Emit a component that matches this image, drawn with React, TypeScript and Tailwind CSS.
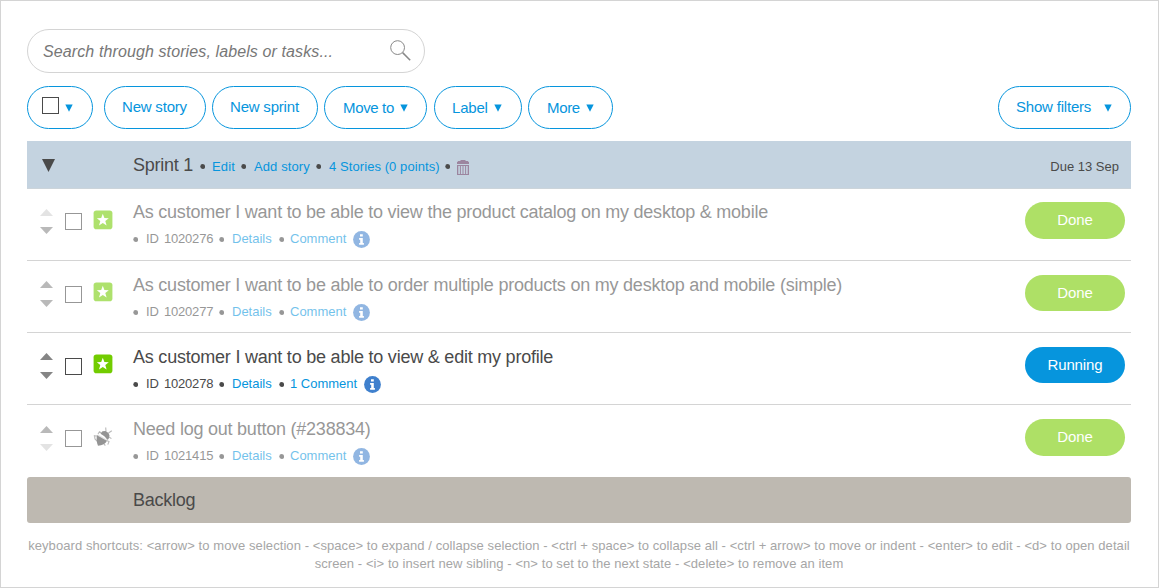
import React from "react";

const Caret = ({ className = "" }: { className?: string }) => (
  <svg className={`shrink-0 ${className}`} width="8" height="8" viewBox="0 0 8 8" fill="currentColor">
    <path d="M0.3 0.5H7.7L4 7.8Z" />
  </svg>
);

const Dot = ({ className }: { className: string }) => (
  <span className={`block shrink-0 ${className}`}>
    <svg width="5" height="5" viewBox="0 0 5 5" fill="currentColor">
      <circle cx="2.7" cy="2.5" r="2.4" />
    </svg>
  </span>
);

const Info = () => (
  <svg className="mt-[1px] shrink-0" width="17" height="17" viewBox="0 0 17 17">
    <circle cx="8.5" cy="8.5" r="8.4" fill="#3f80cd" />
    <path d="M7 3.2h2.8v2.3H7zM6.1 7h3.7v5h1.1v1.7H6.1V12h1.1V8.7H6.1z" fill="#fff" />
  </svg>
);

const Star = () => (
  <svg width="20" height="20" viewBox="0 0 20 20">
    <rect x="0.6" y="0.4" width="18.8" height="18.8" rx="2.8" fill="#72cc00" />
    <path d="M9.800 3.700l1.600 4.300 4.400.2-3.500 2.700 1.300 4.600-3.800-2.600L6 15.500l1.300-4.600L3.800 8.200l4.400-.2z" fill="#fff" />
  </svg>
);

const Bug = () => (
  <svg width="20" height="21" viewBox="0 0 20 21">
    <g fill="#444">
      <path d="M4 9.200L13.800 14.800C13 17.500 9 19.600 5 19.700C3.800 17 3.200 12.500 4 9.200Z" />
      <path d="M7.500 7.800L9.500 5.300L12.500 5L15.500 7L16.500 9.500L15.600 13L14.300 13.700C12.800 11.300 10.200 9.300 7.500 7.800Z" />
      <path d="M5.200 8.600L14.200 13.800L13.800 14.800L4 9.200Z" opacity=".25" />
    </g>
    <path d="M13 5.500L12.700 1.500M15.500 7L18.800 4.800M8.500 7L6.500 5.800 5 8M4.500 10L1.500 9.800 2 13 4.500 15.500M.8 9.800L2 10M13.500 14.500L16 15.600 14.800 18.600M16 11L18.400 12.600M11 17.700L12.300 19.600" fill="none" stroke="#444" strokeWidth="1.1" opacity=".65" />
  </svg>
);

const Trash = () => (
  <svg className="shrink-0" width="12" height="15" viewBox="0 0 12 15" fill="#9c859f">
    <path d="M3.5 0h5v1H11v.8h1V4H0V1.800h1V1h2.500z" />
    <path d="M0 5h12v10H0zM1.300 6v8h1.600V6zM3.900 6v8h1.600V6zM6.500 6v8h1.600V6zM9.100 6v8h1.600V6z" fillRule="evenodd" />
  </svg>
);

const Check = ({ className = "" }: { className?: string }) => (
  <span className={`block size-[17px] shrink-0 border border-[#4a4a4a] bg-white ${className}`} />
);

const pill = "flex h-[43px] shrink-0 items-center rounded-full border border-[#0695dd] pb-px whitespace-nowrap";

type Story = {
  id: string;
  title: string;
  titleClass: string;
  comment: string;
  commentClass: string;
  state: string;
  bug?: boolean;
  first?: boolean;
  last?: boolean;
};

const stories: Story[] = [
  { id: "1020276", title: "As customer I want to be able to view the product catalog on my desktop & mobile", titleClass: "tracking-[-0.23px]", comment: "Comment", commentClass: "w-[63px]", state: "Done", first: true },
  { id: "1020277", title: "As customer I want to be able to order multiple products on my desktop and mobile (simple)", titleClass: "tracking-[-0.225px]", comment: "Comment", commentClass: "w-[63px]", state: "Done" },
  { id: "1020278", title: "As customer I want to be able to view & edit my profile", titleClass: "tracking-[-0.22px]", comment: "1 Comment", commentClass: "w-[74px]", state: "Running" },
  { id: "1021415", title: "Need log out button (#238834)", titleClass: "tracking-[-0.23px]", comment: "Comment", commentClass: "w-[63px]", state: "Done", bug: true, last: true },
];

function StoryRow({ s }: { s: Story }) {
  const done = s.state === "Done";
  const tall = s.first || s.last;
  return (
    <div className={`flex h-[72px] items-start ${s.last ? "" : "border-b border-[#d4d4d4]"}`}>
      <div className={`flex min-w-0 flex-1 items-start ${done ? "opacity-57" : ""}`}>
        <svg className={`ml-[13px] shrink-0 ${s.last ? "mt-[21px]" : "mt-5"}`} width="13" height="26" viewBox="0 0 13 26" fill="#858585">
          <path d="M0 7L6.500 0L13 7Z" opacity={s.first ? 0.4 : 1} />
          <path d={tall ? "M0 18H13L6.500 25Z" : "M0 19H13L6.500 26Z"} opacity={s.last ? 0.4 : 1} />
        </svg>
        <Check className={`ml-3 ${s.first ? "mt-6" : "mt-[25px]"}`} />
        <div className="mt-[21px] ml-[11px] w-[20px] shrink-0">{s.bug ? <Bug /> : <Star />}</div>
        <div className={`ml-5 ${s.first ? "pt-3" : "pt-[13px]"}`}>
          <div className={`h-[22px] text-[18px] leading-[22px] whitespace-nowrap ${s.titleClass}`}>{s.title}</div>
          <div className="mt-[6px] flex h-5 items-center text-[13px] leading-5 whitespace-nowrap">
            <Dot className="w-[13px]" />
            <span className="w-[18px]">ID</span>
            <span className="w-[55px] tracking-[-0.2px]">{s.id}</span>
            <Dot className="w-[13px]" />
            <span className="w-[47px] text-[#0695dd]">Details</span>
            <Dot className="w-[11px]" />
            <span className={`text-[#0695dd] ${s.commentClass}`}>{s.comment}</span>
            <Info />
          </div>
        </div>
      </div>
      <button className={`mr-[6px] w-[100px] rounded-full text-[15px] tracking-[-0.1px] text-white ${s.first ? "mt-[13px]" : "mt-[14px]"} ${tall ? "h-[37px]" : "h-[36px]"} ${done ? "bg-[#aee066]" : "bg-[#0695dd]"}`}>{s.state}</button>
    </div>
  );
}

export default function App() {
  return (
    <div className="flex h-[588px] w-[1159px] flex-col border border-[#d4d4d4] bg-white pt-[28px] pr-[27px] pl-[26px] font-['Liberation_Sans',Arial,sans-serif] text-[#4a4a4a]">
      <div className="flex h-11 w-[398px] shrink-0 items-center justify-between rounded-full border border-[#d4d4d4] pr-[13px] pl-[15px]">
        <span className="pt-[2px] text-[16px] tracking-[0.11px] text-[#777] italic">Search through stories, labels or tasks...</span>
        <svg className="mb-[2px]" width="21" height="21" viewBox="0 0 21 21" fill="none" stroke="#888">
          <circle cx="7.600" cy="7.600" r="6.900" />
          <path d="M12.600 12.600L20.200 20.200" strokeWidth="1.500" />
        </svg>
      </div>
      <div className="mt-[13px] flex shrink-0 text-[15px] tracking-[-0.2px] text-[#0695dd]">
        <div className={`${pill} w-[66px] pl-[14px]`}>
          <Check className="mb-[4px]" />
          <Caret className="mt-[2px] ml-[6px]" />
        </div>
        <div className={`${pill} ml-[11px] w-[102px] pl-[17px]`}>New story</div>
        <div className={`${pill} ml-[6px] w-[106px] pl-[17px]`}>New sprint</div>
        <div className={`${pill} ml-[6px] w-[103px] justify-between pr-[18px] pl-[18px] pt-[2px] tracking-[-0.35px]`}>Move to<Caret /></div>
        <div className={`${pill} ml-[7px] w-[88px] justify-between pr-[19px] pl-[17px] pt-[2px]`}>Label<Caret /></div>
        <div className={`${pill} ml-[6px] w-[85px] justify-between pr-[18px] pl-[18px] pt-[2px] tracking-[-0.35px]`}>More<Caret /></div>
        <div className={`${pill} ml-auto w-[133px] justify-between pr-[18px] pl-[17px]`}>Show filters<Caret className="mt-[2px]" /></div>
      </div>
      <div className="mt-3 flex h-12 shrink-0 items-center border-b border-[#ccd4da] bg-[#c4d3e0] text-[13px] whitespace-nowrap">
        <svg className="mt-[1px] ml-[15px] shrink-0" width="13" height="13" viewBox="0 0 13 13" fill="#4a4a4a"><path d="M0 0H13L6.500 13Z" /></svg>
        <span className="mt-[2px] ml-[78px] w-[67px] text-[18px] tracking-[-0.25px]">Sprint 1</span>
        <div className="flex h-5 items-center pt-[2px] text-[#0695dd]">
          <Dot className="mt-px w-[12px] text-[#4a4a4a]" />
          <span className="mt-[2px] w-[29px] tracking-[0.15px]">Edit</span>
          <Dot className="mt-px w-[13px] text-[#4a4a4a]" />
          <span className="mt-[2px] w-[62px] tracking-[0.1px]">Add story</span>
          <Dot className="mt-px w-[13px] text-[#4a4a4a]" />
          <span className="mt-[2px] w-[116px] tracking-[0.08px]">4 Stories (0 points)</span>
          <Dot className="mt-px w-[12px] text-[#4a4a4a]" />
          <span className="pt-[3px]"><Trash /></span>
        </div>
        <span className="mt-[4px] mr-3 ml-auto">Due 13 Sep</span>
      </div>
      {stories.map((s) => <StoryRow key={s.id} s={s} />)}
      <div className="flex h-[46px] shrink-0 items-center rounded-[3px] bg-[#beb9b1] pl-[106px] text-[18px] tracking-[-0.25px]">Backlog</div>
      <div className="mt-[14px] text-center text-[13px] leading-[18px] tracking-[0.073px] whitespace-nowrap text-[#a6a6a6]">
        <div>keyboard shortcuts: &lt;arrow&gt; to move selection - &lt;space&gt; to expand / collapse selection - &lt;ctrl + space&gt; to collapse all - &lt;ctrl + arrow&gt; to move or indent - &lt;enter&gt; to edit - &lt;d&gt; to open detail</div>
        <div>screen - &lt;i&gt; to insert new sibling - &lt;n&gt; to set to the next state - &lt;delete&gt; to remove an item</div>
      </div>
    </div>
  );
}
